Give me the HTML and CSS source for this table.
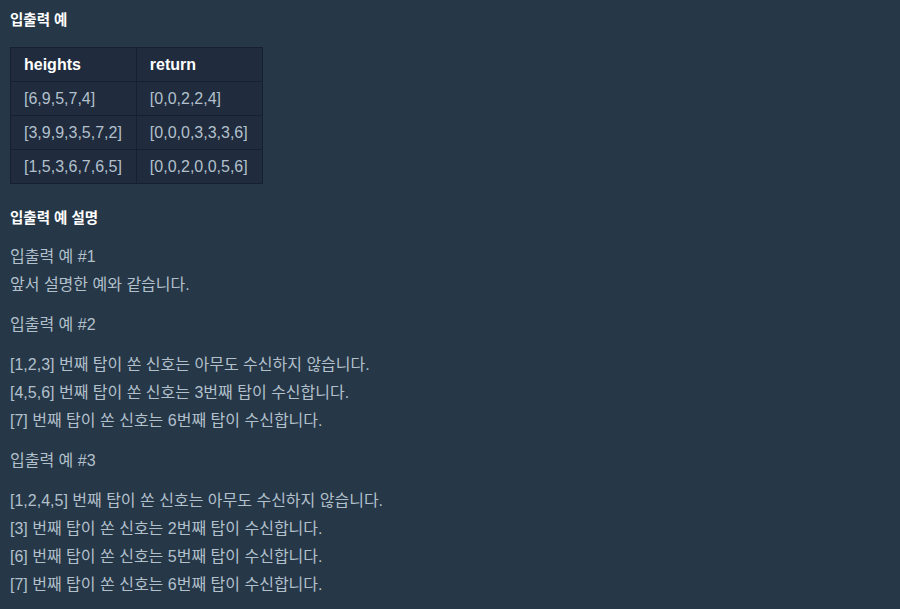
FILE: index.html
```html
<!DOCTYPE html>
<html lang="ko">
<head>
<meta charset="utf-8">
<link rel="stylesheet" href="styles.css">
</head>
<body>
<div class="guide">
  <h5 class="heading first">입출력 예</h5>
  <table class="examples">
    <thead>
      <tr><th>heights</th><th>return</th></tr>
    </thead>
    <tbody>
      <tr><td>[6,9,5,7,4]</td><td>[0,0,2,2,4]</td></tr>
      <tr><td>[3,9,9,3,5,7,2]</td><td>[0,0,0,3,3,3,6]</td></tr>
      <tr><td>[1,5,3,6,7,6,5]</td><td>[0,0,2,0,0,5,6]</td></tr>
    </tbody>
  </table>
  <h5 class="heading">입출력 예 설명</h5>
  <p>입출력 예 #1<br>앞서 설명한 예와 같습니다.</p>
  <p>입출력 예 #2</p>
  <p>[1,2,3] 번째 탑이 쏜 신호는 아무도 수신하지 않습니다.<br>[4,5,6] 번째 탑이 쏜 신호는 3번째 탑이 수신합니다.<br>[7] 번째 탑이 쏜 신호는 6번째 탑이 수신합니다.</p>
  <p>입출력 예 #3</p>
  <p>[1,2,4,5] 번째 탑이 쏜 신호는 아무도 수신하지 않습니다.<br>[3] 번째 탑이 쏜 신호는 2번째 탑이 수신합니다.<br>[6] 번째 탑이 쏜 신호는 5번째 탑이 수신합니다.<br>[7] 번째 탑이 쏜 신호는 6번째 탑이 수신합니다.</p>
</div>
</body>
</html>
```
FILE: styles.css
```css
html, body {
  margin: 0;
  padding: 0;
  background: #263747;
}
body {
  font-family: "Liberation Sans", "Noto Sans CJK KR", sans-serif;
  color: #b2c0cc;
  font-size: 16px;
}
.guide {
  padding: 8px 10px 0 10px;
}
.heading {
  margin: 0;
  font-size: 14.5px;
  line-height: 24px;
  font-weight: 700;
  color: #ffffff;
}
.heading.first {
  margin-bottom: 15px;
}
.examples {
  border-collapse: collapse;
  background: #202b3d;
  margin-bottom: 22px;
}
.examples th,
.examples td {
  border: 1px solid #172030;
  padding: 5px 14px 4px 13px;
  line-height: 24px;
  text-align: left;
}
.examples th {
  color: #ffffff;
  font-weight: 700;
}
.examples + .heading {
  margin-bottom: 13px;
}
p {
  margin: 0 0 12px 0;
  line-height: 28px;
}
```
